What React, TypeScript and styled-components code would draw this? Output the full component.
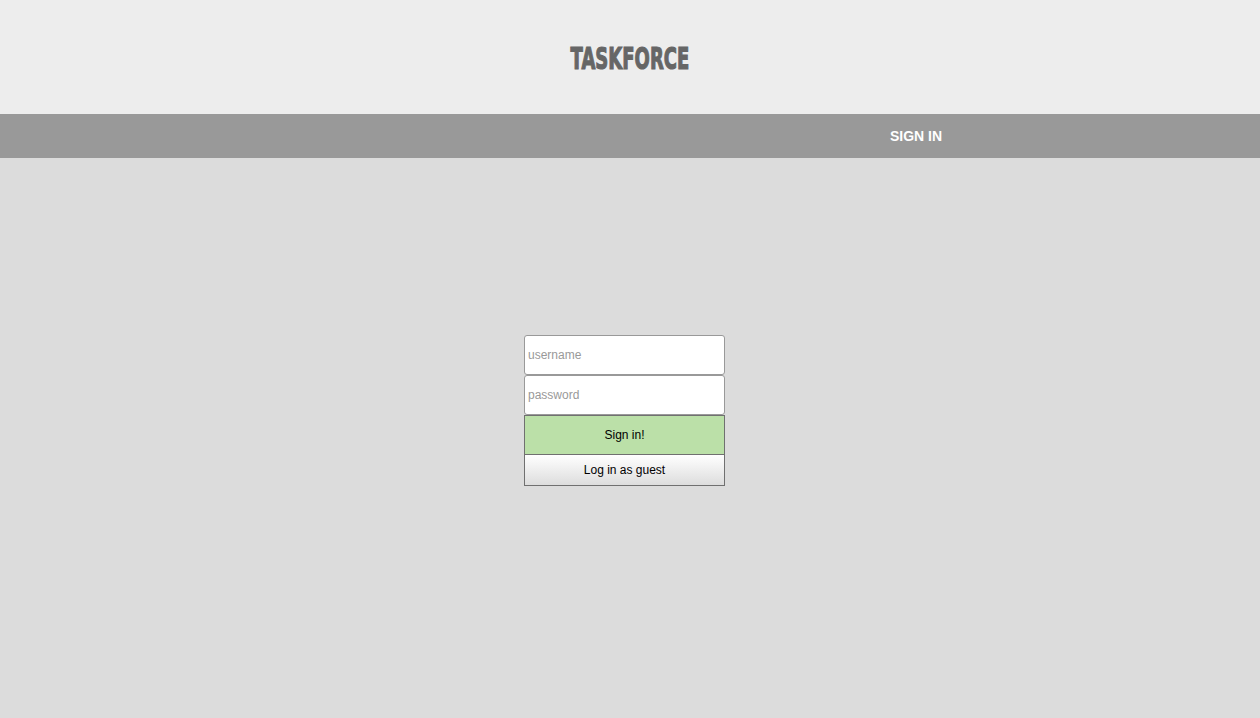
import React from "react";
import styled, { createGlobalStyle } from "styled-components";

const Global = createGlobalStyle`
  html, body { margin: 0; padding: 0; background: #dcdcdc; }
  body { font-family: "Liberation Sans", Arial, sans-serif; }
  * { box-sizing: border-box; }
`;

const Page = styled.div`
  display: flex;
  flex-direction: column;
  min-height: 718px;
  background: #dcdcdc;
`;

const Header = styled.header`
  height: 114px;
  background: #ededed;
  display: flex;
  align-items: center;
  justify-content: center;
`;

const Title = styled.h1`
  margin: 0;
  padding-top: 2px;
  font-family: "DejaVu Sans", sans-serif;
  font-weight: 700;
  font-size: 30px;
  letter-spacing: 0;
  color: #666;
  -webkit-text-stroke: 1.2px #666;
  transform: scaleX(0.6);
`;

const Nav = styled.nav`
  height: 44px;
  background: #999;
  display: flex;
  align-items: center;
  padding-left: 890px;
`;

const NavLink = styled.a`
  color: #fff;
  font-weight: 700;
  font-size: 14px;
  text-decoration: none;
`;

const Main = styled.main`
  flex: 1;
  display: flex;
  justify-content: center;
  padding-top: 177px;
  padding-right: 11px;
`;

const Form = styled.form`
  width: 201px;
  display: flex;
  flex-direction: column;
`;

const Input = styled.input`
  height: 40px;
  width: 100%;
  margin: 0;
  border: 1px solid #999;
  border-radius: 3px;
  background: #fff;
  padding: 0 3px;
  font-family: "Liberation Sans", Arial, sans-serif;
  font-size: 12px;
  color: #333;
  &::placeholder { color: #999; }
`;

const Button = styled.button<{ $variant: "green" | "plain" }>`
  width: 100%;
  margin: 0;
  height: ${(p) => (p.$variant === "green" ? "40px" : "31px")};
  border: 1px solid #707070;
  border-top: ${(p) => (p.$variant === "green" ? "1px solid #707070" : "none")};
  background: ${(p) =>
    p.$variant === "green" ? "#bbe0a8" : "linear-gradient(#ffffff, #dddddd)"};
  font-family: "Liberation Sans", Arial, sans-serif;
  font-size: 12px;
  color: #000;
  padding: 0;
`;

export default function App() {
  return (
    <Page>
      <Global />
      <Header>
        <Title>TASKFORCE</Title>
      </Header>
      <Nav>
        <NavLink href="#">SIGN IN</NavLink>
      </Nav>
      <Main>
        <Form onSubmit={(e) => e.preventDefault()}>
          <Input placeholder="username" />
          <Input type="password" placeholder="password" />
          <Button $variant="green" type="submit">Sign in!</Button>
          <Button $variant="plain" type="button">Log in as guest</Button>
        </Form>
      </Main>
    </Page>
  );
}
